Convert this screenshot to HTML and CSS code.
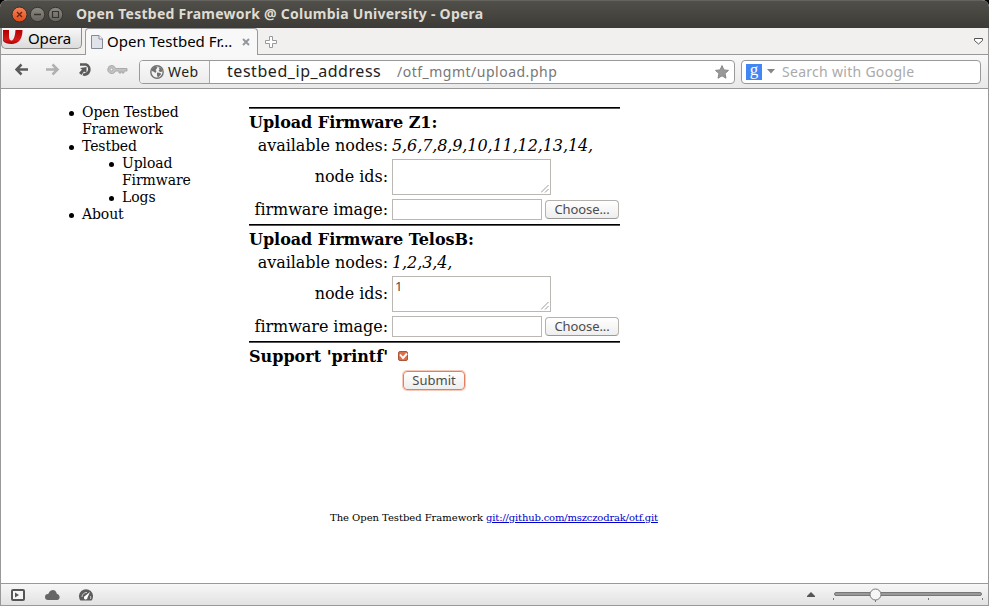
FILE: index.html
```html
<!DOCTYPE html>
<html lang="en">
<head>
<meta charset="utf-8">
<title>Open Testbed Framework @ Columbia University - Opera</title>
<link rel="stylesheet" href="styles.css">
</head>
<body>
<div class="window">
  <header class="titlebar">
    <svg class="controls" width="56" height="20" viewBox="0 0 56 20">
      <defs>
        <linearGradient id="orange" x2="0" y2="1"><stop stop-color="#f58458"/><stop offset="1" stop-color="#df4b1c"/></linearGradient>
        <linearGradient id="gray" x2="0" y2="1"><stop stop-color="#8d8a82"/><stop offset="1" stop-color="#65635c"/></linearGradient>
      </defs>
      <circle cx="11.500" cy="10.500" r="7.500" fill="url(#orange)" stroke="#302f2b"/>
      <path d="M9 8l5 5M14 8l-5 5" stroke="#602713" stroke-width="1.300"/>
      <circle cx="29.500" cy="10.500" r="7.200" fill="url(#gray)" stroke="#34332f"/>
      <path d="M26 10.500h7" stroke="#34332f" stroke-width="1.300"/>
      <circle cx="47.500" cy="10.500" r="7.200" fill="url(#gray)" stroke="#34332f"/>
      <path d="M44.500 7.500h6v6h-6z" fill="none" stroke="#34332f" stroke-width="1.200"/>
    </svg>
    <span class="window-title">Open Testbed Framework @ Columbia University - Opera</span>
  </header>

  <nav class="tabs">
    <div class="opera-menu">
      <svg width="21" height="17" viewBox="0 0 21 17">
        <defs><linearGradient id="red" x2="0" y2="1"><stop stop-color="#b40000"/><stop offset=".7" stop-color="#d51a1a"/><stop offset="1" stop-color="#a00"/></linearGradient></defs>
        <path d="M1 2h6v6c0 3 1 4.500 2.500 4.500S13 10 13.500 2H20.500c0 9-4 14-11 14-4 0-7-1-8.500-3z" fill="url(#red)"/>
      </svg>
      <span class="opera-label">Opera</span>
    </div>
    <div class="tab">
      <svg width="12" height="14" viewBox="0 0 12 14"><path d="M.5.500h7.500l3.500 3.500v9.500H.5z" fill="#e0e4ea" stroke="#858b95"/><path d="M8 .5V4h3.500" fill="#fff" stroke="#858b95"/></svg>
      <span class="tab-label">Open Testbed Fr...</span>
      <svg class="tab-close" width="8" height="8" viewBox="0 0 8 8"><path d="M1 1l6 6M7 1L1 7" stroke="#92969d" stroke-width="1.900"/></svg>
    </div>
    <svg class="new-tab" width="14" height="14" viewBox="0 0 14 14"><path d="M5.500 1.500h3v4h4v3h-4v4h-3v-4h-4v-3h4z" fill="#fff" stroke="#999"/></svg>
    <svg class="tab-list" width="9" height="7" viewBox="0 0 9 7"><path d="M.5.500h8v2L4.500 6 .5 2.500z" fill="#fff" stroke="#555"/></svg>
  </nav>

  <div class="toolbar">
    <svg class="nav-icons" width="116" height="16" viewBox="0 0 116 16">
      <path d="M6.500 2.500L1.500 7.500l5 5M2 7.500h11" fill="none" stroke="#5b5b5b" stroke-width="2.500"/>
      <path d="M37.500 2.500l5 5-5 5M42 7.500H31" fill="none" stroke="#b0b0b0" stroke-width="2.500"/>
      <path d="M65 2.500h6a4.500 4.800 0 1 1-3 9.800" fill="none" stroke="#5b5b5b" stroke-width="2.700"/>
      <path d="M71.500 5v6L69 9.500l-2.500 3.500-2.500-2 3-3.500-2-1.500z" fill="#5b5b5b"/>
      <path d="M97 3.500a4 4 0 1 0 3.500 5.500H104v2h2V9h1v2h2V9h3V6.500h-11.500A4 4 0 0 0 97 3.500z" fill="#c2c2c2" stroke="#aaa"/>
      <circle cx="96.500" cy="7.500" r="1.400" fill="#f4f4f4" stroke="#aaa"/>
    </svg>
    <div class="address">
      <div class="web-badge">
        <svg width="14" height="14" viewBox="0 0 14 14"><circle cx="7" cy="7" r="6.200" fill="#f2f2f2" stroke="#707070" stroke-width="1.400"/><path d="M2 4l3-2.500 2.500.5L6.500 4l-1 1 1 1-1 2-2-1.500L1.500 6zM8.500 2l3 1.500 1 3-2 .500-2-1 1-1.500zM7 7.500l3.500.5.500 1.500-3 3-1-2z" fill="#707070"/></svg>
        <span class="web-label">Web</span>
      </div>
      <span class="host">testbed_ip_address</span>
      <span class="path">/otf_mgmt/upload.php</span>
      <svg class="star" width="14" height="14" viewBox="0 0 14 14"><path d="M7 .6l1.900 4.300 4.600.5-3.500 3.100 1 4.700L7 10.800l-4 2.400 1-4.700L.5 5.400l4.600-.5z" fill="#999" stroke="#858585"/></svg>
    </div>
    <div class="search">
      <span class="google">g</span>
      <svg width="8" height="5" viewBox="0 0 8 5"><path d="M0 0h8L4 4.500z" fill="#858585"/></svg>
      <span class="search-label">Search with Google</span>
    </div>
  </div>

  <main class="page">
    <ul class="menu">
      <li>Open Testbed Framework</li>
      <li>Testbed
        <ul>
          <li>Upload Firmware</li>
          <li>Logs</li>
        </ul>
      </li>
      <li>About</li>
    </ul>
    <div class="content">
      <section class="device">
        <h2>Upload Firmware Z1:</h2>
        <span class="label">available nodes:</span><em class="nodes">5,6,7,8,9,10,11,12,13,14,</em>
        <span class="label raised">node ids:</span>
        <div class="area"><svg class="grip" width="8" height="8" viewBox="0 0 8 8"><path d="M0 7.500L7.500 0M4 7.500L7.500 4" stroke="#999"/></svg></div>
        <span class="label raised">firmware image:</span>
        <div class="file"><span class="field"></span><span class="button">Choose...</span></div>
      </section>
      <section class="device">
        <h2>Upload Firmware TelosB:</h2>
        <span class="label">available nodes:</span><em class="nodes">1,2,3,4,</em>
        <span class="label raised">node ids:</span>
        <div class="area">1<svg class="grip" width="8" height="8" viewBox="0 0 8 8"><path d="M0 7.500L7.500 0M4 7.500L7.500 4" stroke="#999"/></svg></div>
        <span class="label raised">firmware image:</span>
        <div class="file"><span class="field"></span><span class="button">Choose...</span></div>
      </section>
      <section class="printf">
        <h2>Support 'printf'</h2>
        <svg class="check" width="10" height="10" viewBox="0 0 10 10"><rect x=".5" y=".5" width="9" height="9" rx="1.500" fill="#dc6f48" stroke="#a9573a"/><path d="M2 3.500l3 3.500L9 2.500" fill="none" stroke="#fff" stroke-width="1.900"/></svg>
        <span class="button submit">Submit</span>
      </section>
    </div>
    <footer class="footer">The Open Testbed Framework <a href="#">git://github.com/mszczodrak/otf.git</a></footer>
  </main>

  <div class="status">
    <svg width="90" height="14" viewBox="0 0 90 14">
      <rect x="1" y="2" width="12" height="10" rx="1" fill="#f5f5f5" stroke="#555" stroke-width="2"/><path d="M4 4.500v5L8 7z" fill="#555"/>
      <path d="M37 12a3 3 0 0 1 0-6c1 0 1-4 5-4 3 0 3.500 3 4 4 3 0 4 6 0 6z" fill="#666"/>
      <path d="M69.500 12.500A7 7 0 1 1 80.500 12.500z" fill="#5c5c5c"/><path d="M71 9a4.500 4.500 0 0 1 5-4.500M79.500 8q.5 2 0 3" fill="none" stroke="#ccc"/><path d="M79 4l-2.500 5.500a1.800 1.800 0 1 1-2.500-1.500z" fill="#fff"/>
    </svg>
    <svg class="zoom" width="180" height="17" viewBox="0 0 180 17">
      <path d="M0 10l4-4 4 4v1H0z" fill="#555"/>
      <rect x="27.500" y="6.500" width="147" height="3" rx="1.500" fill="#999" stroke="#777"/>
      <path d="M26.500 12v2M68.500 13v3M121.500 12v2M175.500 12v2" stroke="#777"/>
      <circle cx="68.500" cy="8.500" r="5.500" fill="#f6f6f6" stroke="#777"/>
    </svg>
  </div>
</div>
</body>
</html>
```
FILE: styles.css
```css
* { box-sizing: border-box; }
body { margin: 0; background: #000; font-family: "Noto Sans", sans-serif; }
.window { display: flex; flex-direction: column; width: 989px; height: 606px; overflow: hidden; border-radius: 7px 7px 0 0; background: #fff; white-space: nowrap; }
svg { display: block; flex: none; }

.titlebar { display: flex; align-items: center; height: 28px; padding: 0 0 0 8px; background: linear-gradient(#504f49, #3c3b37); border-top: 1px solid #65635d; }
.controls { margin-top: -1px; }
.window-title { margin: -2px 0 0 12px; color: #dfdbd2; font: bold 14px "Noto Sans", sans-serif; letter-spacing: .25px; }

.tabs { display: flex; height: 27px; background: #f1f0ef; border: solid #999; border-width: 0 1px 1px; }
.opera-menu { display: flex; width: 81px; height: 21px; background: linear-gradient(#f7f7f7, #dcdcdc); border: 1px solid #8c8c8c; border-top: 0; border-radius: 0 0 5px 5px; }
.opera-label { margin-left: 5px; font-size: 15px; line-height: 21px; letter-spacing: -.15px; }
.tab { display: flex; align-items: center; width: 173px; height: 27px; margin-left: 3px; padding-left: 5px; background: #f8f8f8; border: 1px solid #999; border-bottom: 0; border-radius: 4px 4px 0 0; }
.tab-label { width: 126px; margin-left: 4px; padding-bottom: 1px; font-size: 15px; line-height: 25px; }
.tab-close { margin-left: 9px; }
.new-tab { margin: 7px 0 0 6px; }
.tab-list { margin: 10px 5px 0 auto; }

.toolbar { display: flex; align-items: center; height: 34px; background: linear-gradient(#f8f8f8, #e9e9e9); border: solid #999; border-width: 0 1px 1px; }
.nav-icons { margin: -3px 8px 0 14px; }
.address { display: flex; align-items: center; width: 596px; height: 24px; background: #fff; border: 1px solid #999; border-radius: 4px; font-size: 15px; }
.web-badge { display: flex; align-items: center; width: 70px; height: 22px; padding-left: 10px; background: linear-gradient(#f9f9f9, #ececec); border-right: 1px solid #aaa; border-radius: 3px 0 0 3px; }
.web-label { margin-left: 4px; color: #222; font-size: 14px; letter-spacing: .4px; }
.host { width: 170px; margin-left: 17px; padding-bottom: 2px; color: #222; font-size: 16px; line-height: 20px; letter-spacing: .55px; }
.path { color: #777; font-size: 14px; letter-spacing: .5px; }
.star { margin: 0 5px 0 auto; }
.search { display: flex; align-items: center; width: 240px; height: 24px; margin-left: 6px; padding-left: 4px; background: #fff; border: 1px solid #999; border-radius: 4px; color: #aaa; }
.google { width: 16px; height: 16px; margin-right: 5px; background: #4285f4; color: #fff; font: 17px/12px "Liberation Serif", serif; text-align: center; }
.search-label { margin-left: 7px; font-size: 14px; letter-spacing: .29px; }

.page { display: grid; grid-template: 405px 89px / 248px 1fr; height: 494px; border: solid #999; border-width: 0 1px; font-family: "DejaVu Serif", serif; }
.menu { width: 160px; margin: 15px 0 0 41px; padding-left: 40px; font-size: 14px; line-height: 17px; letter-spacing: -.1px; white-space: normal; list-style: none; }
.menu ul { padding-left: 40px; margin: 0; list-style: none; }
.menu li::before { content: ""; float: left; width: 5px; height: 5px; margin: 7px 0 0 -13px; border-radius: 50%; background: #000; }
.content { width: 371px; padding-top: 18px; font-size: 16px; }
h2 { margin: 0; font-size: 16px; font-weight: bold; }
.device { display: grid; grid-template: 25px 23px 40px 27px / 139px 1fr; column-gap: 4px; align-items: center; }
.device, .printf { border-top: 1px solid #000; box-shadow: inset 0 1px #555; padding-top: 1px; }
.device h2 { grid-column: 1 / 3; padding-top: 1px; letter-spacing: -.03px; }
.label { text-align: right; letter-spacing: -.05px; }
.raised { margin-top: -2px; }
.nodes { letter-spacing: -.1px; }
.area { position: relative; width: 159px; height: 36px; padding: 1px 2px; border: 1px solid #bbb8b3; color: #4c4c4c; font: 13px/17px "Noto Sans", sans-serif; }
.grip { position: absolute; right: 1px; bottom: 1px; }
.file { display: flex; align-items: center; margin-top: -2px; }
.field { width: 150px; height: 21px; border: 1px solid #bbb8b3; }
.button { width: 74px; height: 19px; margin-left: 3px; border: 1px solid #b5b2ad; border-bottom-color: #999; border-radius: 4px; background: linear-gradient(#fff, #eee); color: #4c4c4c; font: 13px/17px "Noto Sans", sans-serif; letter-spacing: -.1px; text-align: center; }
.printf { display: grid; grid-template: 26px 22px / 139px 1fr; column-gap: 10px; align-items: center; }
.submit { grid-column: 2; width: 62px; margin-left: 5px; border-color: #e3815f; box-shadow: 0 0 0 1px #f6c9b8; letter-spacing: 0; }
.footer { grid-column: 1 / 3; padding-top: 17px; padding-left: 329px; font: 10px/13px "DejaVu Serif", serif; letter-spacing: -.03px; }
.footer a { color: #00c; letter-spacing: -.17px; }

.status { display: flex; align-items: center; justify-content: space-between; height: 23px; padding: 0 1px 0 10px; background: linear-gradient(#f7f7f7, #e2e2e2); border: 1px solid #999; }
.zoom { margin-top: -1px; }
```
